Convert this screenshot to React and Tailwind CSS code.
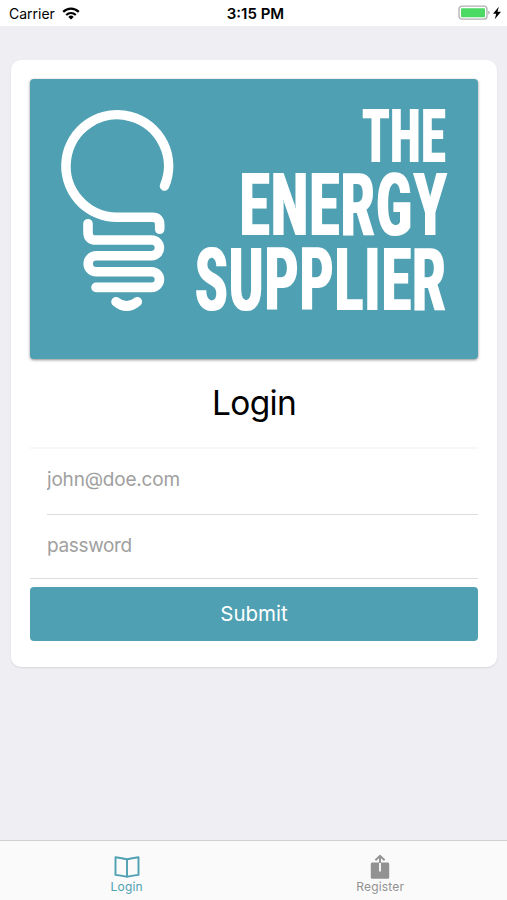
import React, { useState } from "react";

const tabs = [
  { id: "login", label: "Login", Icon: BookIcon },
  { id: "register", label: "Register", Icon: ShareIcon },
];

function WifiIcon() {
  return (
    <svg width="18" height="13" viewBox="0 0 18 13" fill="none" stroke="#000" strokeWidth="2.2">
      <path d="M1.2 4.9C5.6.6 12.4.6 16.8 4.9" />
      <path d="M4.2 8C7 5.4 11 5.4 13.8 8" />
      <path d="M9 12.6 6.3 9.9a3.9 3.9 0 0 1 5.4 0z" fill="#000" stroke="none" />
    </svg>
  );
}

function BatteryIcon() {
  return (
    <svg width="44" height="16" viewBox="0 0 44 16">
      <rect x="1" y="1.2" width="28" height="13" rx="3" fill="#fff" stroke="#b0b0b0" strokeWidth="1.3" />
      <rect x="3" y="3.2" width="24" height="9" rx="1" fill="#4cd964" />
      <path d="M30.3 5.8c2 .6 2 3.2 0 3.8z" fill="#a8a8a8" />
      <path d="M40.8 1.8 35 8.7h3.2l-1.4 5.5 6.2-7.4h-3.5z" fill="#000" />
    </svg>
  );
}

function BookIcon() {
  return (
    <svg width="26" height="22" viewBox="0 0 26 22" fill="none" stroke="currentColor" strokeWidth="1.9" strokeLinejoin="round">
      <path d="M13 3.2C9.5 2.6 5.5 1.8 1.5 1.2v17.7c4 .6 8 1.2 11.5 1.9 3.5-.7 7.500-1.300 11.500-1.900V1.200c-4 .6-8 1.400-11.500 2z" />
      <path d="M13 3.2v17.3" />
    </svg>
  );
}

function ShareIcon() {
  return (
    <svg width="20" height="26" viewBox="0 0 20 26">
      <path d="M2.4 8.6h15.2c.9 0 1.6.7 1.6 1.6v13c0 .9-.7 1.6-1.6 1.6H2.4c-.9 0-1.6-.7-1.6-1.6v-13c0-.9.7-1.6 1.6-1.6z" fill="currentColor" />
      <path d="M10 8.600v8.800" stroke="#fafafa" strokeWidth="1.9" />
      <path d="M10 9V2M5.4 6.200 10 1.800l4.600 4.400" fill="none" stroke="currentColor" strokeWidth="1.9" />
    </svg>
  );
}

function Logo() {
  return (
    <svg className="block w-full" viewBox="0 0 448 280" overflow="visible">
      <defs>
        <filter id="thicken" x="-5%" y="-5%" width="110%" height="110%">
          <feMorphology operator="dilate" radius="1 0" />
        </filter>
      </defs>
      <g fill="none" stroke="#fff" strokeWidth="9.6" strokeLinecap="round">
        <path d="M134.5 107A51.3 51.3 0 1 0 87.2 138.300H122.500Q129.700 138.300 129.700 145.500V150.300" />
        <path d="M58 144.700v8.500q0 7.800 7.800 7.800h55.800a7.850 7.850 0 0 1 0 15.700H66.200a8 8 0 0 0 0 16h55.400a7.850 7.850 0 0 1 0 15.700H66" />
        <path d="M86 222.700q10.600 8.600 21.300 0" />
      </g>
      <g fill="#fff" className="font-['Roboto',sans-serif] font-extrabold" filter="url(#thicken)">
        <text x="333" y="83" fontSize="73.8" letterSpacing="3.5" textLength="84" lengthAdjust="spacingAndGlyphs">THE</text>
        <text x="210" y="155.5" fontSize="87.9" letterSpacing="3.5" textLength="208.5" lengthAdjust="spacingAndGlyphs">ENERGY</text>
        <text x="165.5" y="231.3" fontSize="87.9" letterSpacing="3.5" textLength="252" lengthAdjust="spacingAndGlyphs">SUPPLIER</text>
      </g>
    </svg>
  );
}

export default function App() {
  const [active, setActive] = useState("login");

  return (
    <div className="flex h-screen flex-col bg-[#efeef3] font-['Inter',sans-serif]">
      <header className="grid h-[26px] shrink-0 grid-cols-3 items-center bg-white pl-[9px] pr-[5px] text-black">
        <div className="flex items-center gap-[7px] pt-px text-[14px]">
          <span>Carrier</span>
          <WifiIcon />
        </div>
        <div className="pt-0.5 text-center text-[15px] font-semibold">3:15 PM</div>
        <div className="flex justify-end">
          <BatteryIcon />
        </div>
      </header>

      <main className="flex-1 pl-[11px] pr-[10px] pt-[34px]">
        <form
          className="h-[607px] rounded-[10px] bg-white px-[19px] pt-[19px] shadow-[0_1px_2px_rgba(0,0,0,0.1)]"
          onSubmit={(e) => e.preventDefault()}
        >
          <div className="h-[280px] rounded-[4px] bg-[#4ea0b2] shadow-[0_1px_3px_rgba(0,0,0,0.45)]">
            <Logo />
          </div>
          <h1 className="flex h-[90px] items-center justify-center border-b-2 border-[#f7f7f7] pt-px text-[33.5px] tracking-[-0.7px] text-black">
            Login
          </h1>
          <div className="border-b border-[#dcdcdc] pl-[17px]">
            <input
              type="email"
              placeholder="john@doe.com"
              className="block h-[66px] w-full border-b border-[#dcdcdc] pb-1 text-[19px] tracking-[-0.2px] outline-none placeholder:text-[#a0a0a0]"
            />
            <input
              type="password"
              placeholder="password"
              className="block h-[63px] w-full pb-0.5 text-[19px] tracking-[-0.35px] outline-none placeholder:text-[#a0a0a0]"
            />
          </div>
          <button type="submit" className="mt-2 h-[54px] w-full rounded-[4px] bg-[#4ea0b2] text-[20.5px] text-white">
            Submit
          </button>
        </form>
      </main>

      <nav className="grid h-[60px] shrink-0 grid-cols-2 border-t border-[#d0d0d4] bg-[#fafafa]">
        {tabs.map(({ id, label, Icon }) => (
          <button
            key={id}
            onClick={() => setActive(id)}
            className={`flex flex-col items-center pt-[13px] text-[12px] tracking-[0.2px] ${
              active === id ? "text-[#4ea0b2]" : "text-[#929292]"
            }`}
          >
            <span className="flex h-[26px] items-center">
              <Icon />
            </span>
            <span className="leading-[14px]">{label}</span>
          </button>
        ))}
      </nav>
    </div>
  );
}
